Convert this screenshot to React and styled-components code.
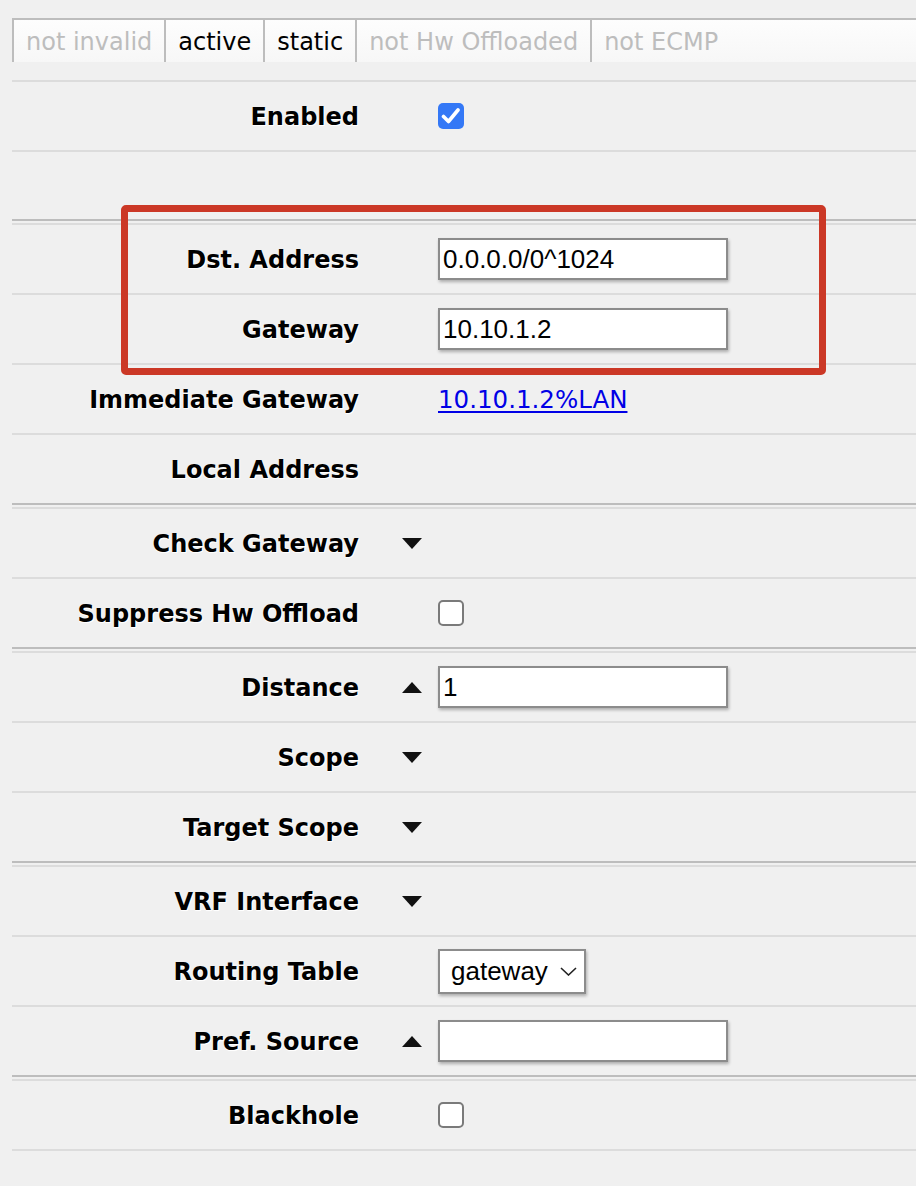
import React from 'react'
import styled, { createGlobalStyle, css } from 'styled-components'

const GlobalStyle = createGlobalStyle`
  html, body {
    margin: 0;
    padding: 0;
    background: #f0f0f0;
  }
  body {
    font-family: "DejaVu Sans", Verdana, sans-serif;
    color: #000;
  }
`

const Page = styled.div`
  padding: 18px 0 0 12px;
  min-height: 1186px;
  box-sizing: border-box;
`

const Tabs = styled.div`
  display: flex;
  margin-bottom: 18px;
`

const Tab = styled.div`
  flex: ${p => (p.$fill ? 1 : 'none')};
  height: 44px;
  box-sizing: border-box;
  border-top: 2px solid #bdbdbd;
  border-left: 2px solid #bdbdbd;
  background: linear-gradient(#fdfdfd, #f7f7f7);
  padding: 1px 12px 0;
  font-size: 24px;
  line-height: 42px;
  white-space: nowrap;
  color: ${p => (p.$on ? '#000' : '#bdbdbd')};
`

const Row = styled.div`
  display: flex;
  align-items: center;
  height: ${p => p.$h || 68}px;
  border-bottom: 2px solid #dcdcdc;
`

const Group = styled.section`
  position: relative;
  ${p =>
    p.$plain
      ? css`
          border-top: 2px solid #dcdcdc;
        `
      : css`
          border-top: 2px solid #bdbdbd;
          &::before {
            content: '';
            display: block;
            height: 2px;
            margin-top: 2px;
            background: #dcdcdc;
          }
        `}
  & > ${Row}:last-child {
    border-bottom: ${p => (p.$open ? '2px solid #dcdcdc' : 'none')};
  }
`

const Label = styled.div`
  width: 347px;
  flex-shrink: 0;
  padding-top: 2px;
  text-align: right;
  font-weight: bold;
  font-size: 24px;
  white-space: nowrap;
  text-shadow: 1px 1px 0 #fff, 0 1px 1px #fff;
`

const Toggle = styled.div`
  width: 79px;
  flex-shrink: 0;
  box-sizing: border-box;
  padding-left: 43px;
  display: flex;
  align-items: center;
`

const TextInput = styled.input`
  width: 290px;
  height: 42px;
  box-sizing: border-box;
  border: 2px solid #8c8c8c;
  border-radius: 0;
  background: #fff;
  padding: 0 3px;
  margin: 0;
  font-family: "Liberation Sans", Arial, sans-serif;
  font-size: 26px;
  color: #000;
  box-shadow: 1px 2px 3px rgba(0, 0, 0, 0.28);
  outline: none;
`

const Select = styled.div`
  width: 148px;
  height: 45px;
  box-sizing: border-box;
  border: 2px solid #8c8c8c;
  background: #fff;
  padding-left: 11px;
  display: flex;
  align-items: center;
  gap: 12px;
  font-family: "Liberation Sans", Arial, sans-serif;
  font-size: 26px;
  box-shadow: 1px 2px 3px rgba(0, 0, 0, 0.28);
`

const Box = styled.span`
  width: 26px;
  height: 26px;
  box-sizing: border-box;
  border-radius: 5px;
  display: flex;
  align-items: center;
  justify-content: center;
  ${p =>
    p.$checked
      ? css`
          background: #3478f6;
        `
      : css`
          background: #fff;
          border: 2px solid #7a7a7a;
        `}
`

const Link = styled.a`
  padding-top: 1px;
  font-size: 24.5px;
  color: #0000e6;
  text-decoration: underline;
  text-underline-offset: 3px;
`

const Highlight = styled.div`
  position: absolute;
  left: 109px;
  top: -16px;
  width: 705px;
  height: 170px;
  box-sizing: border-box;
  border: 7px solid #cb3826;
  border-radius: 5px;
  pointer-events: none;
`

const Arrow = ({ up }) => (
  <svg width="20" height="11" viewBox="0 0 20 11">
    <polygon points={up ? '0,11 20,11 10,0' : '0,0 20,0 10,11'} fill="#111" />
  </svg>
)

const Check = ({ on }) => (
  <Box $checked={on}>
    {on && (
      <svg width="20" height="18" viewBox="0 0 20 18">
        <polyline points="2.5,9.5 7.5,14.5 17,3" fill="none" stroke="#fff" strokeWidth="3.6" strokeLinecap="round" strokeLinejoin="round" />
      </svg>
    )}
  </Box>
)

const Field = ({ label, arrow, h, children }) => (
  <Row $h={h}>
    <Label>{label}</Label>
    <Toggle>{arrow && <Arrow up={arrow === 'up'} />}</Toggle>
    {children}
  </Row>
)

const tabs = [
  ['not invalid', false],
  ['active', true],
  ['static', true],
  ['not Hw Offloaded', false],
  ['not ECMP', false],
]

export default function App() {
  return (
    <Page>
      <GlobalStyle />
      <Tabs>
        {tabs.map(([t, on], i) => (
          <Tab key={t} $on={on} $fill={i === tabs.length - 1}>
            {t}
          </Tab>
        ))}
      </Tabs>

      <Group $plain>
        <Field label="Enabled">
          <Check on />
        </Field>
        <Row $h={67} />
      </Group>

      <Group>
        <Highlight />
        <Field label="Dst. Address">
          <TextInput readOnly value="0.0.0.0/0^1024" />
        </Field>
        <Field label="Gateway">
          <TextInput readOnly value="10.10.1.2" />
        </Field>
        <Field label="Immediate Gateway">
          <Link href="#">10.10.1.2%LAN</Link>
        </Field>
        <Field label="Local Address" />
      </Group>

      <Group>
        <Field label="Check Gateway" arrow="down" />
        <Field label="Suppress Hw Offload">
          <Check />
        </Field>
      </Group>

      <Group>
        <Field label="Distance" arrow="up">
          <TextInput readOnly value="1" />
        </Field>
        <Field label="Scope" arrow="down" />
        <Field label="Target Scope" arrow="down" />
      </Group>

      <Group>
        <Field label="VRF Interface" arrow="down" />
        <Field label="Routing Table">
          <Select>
            gateway
            <svg width="17" height="9" viewBox="0 0 17 9">
              <polyline points="1,1 8.5,8 16,1" fill="none" stroke="#222" strokeWidth="1.6" />
            </svg>
          </Select>
        </Field>
        <Field label="Pref. Source" arrow="up">
          <TextInput readOnly value="" />
        </Field>
      </Group>

      <Group $open>
        <Field label="Blackhole">
          <Check />
        </Field>
      </Group>
    </Page>
  )
}
